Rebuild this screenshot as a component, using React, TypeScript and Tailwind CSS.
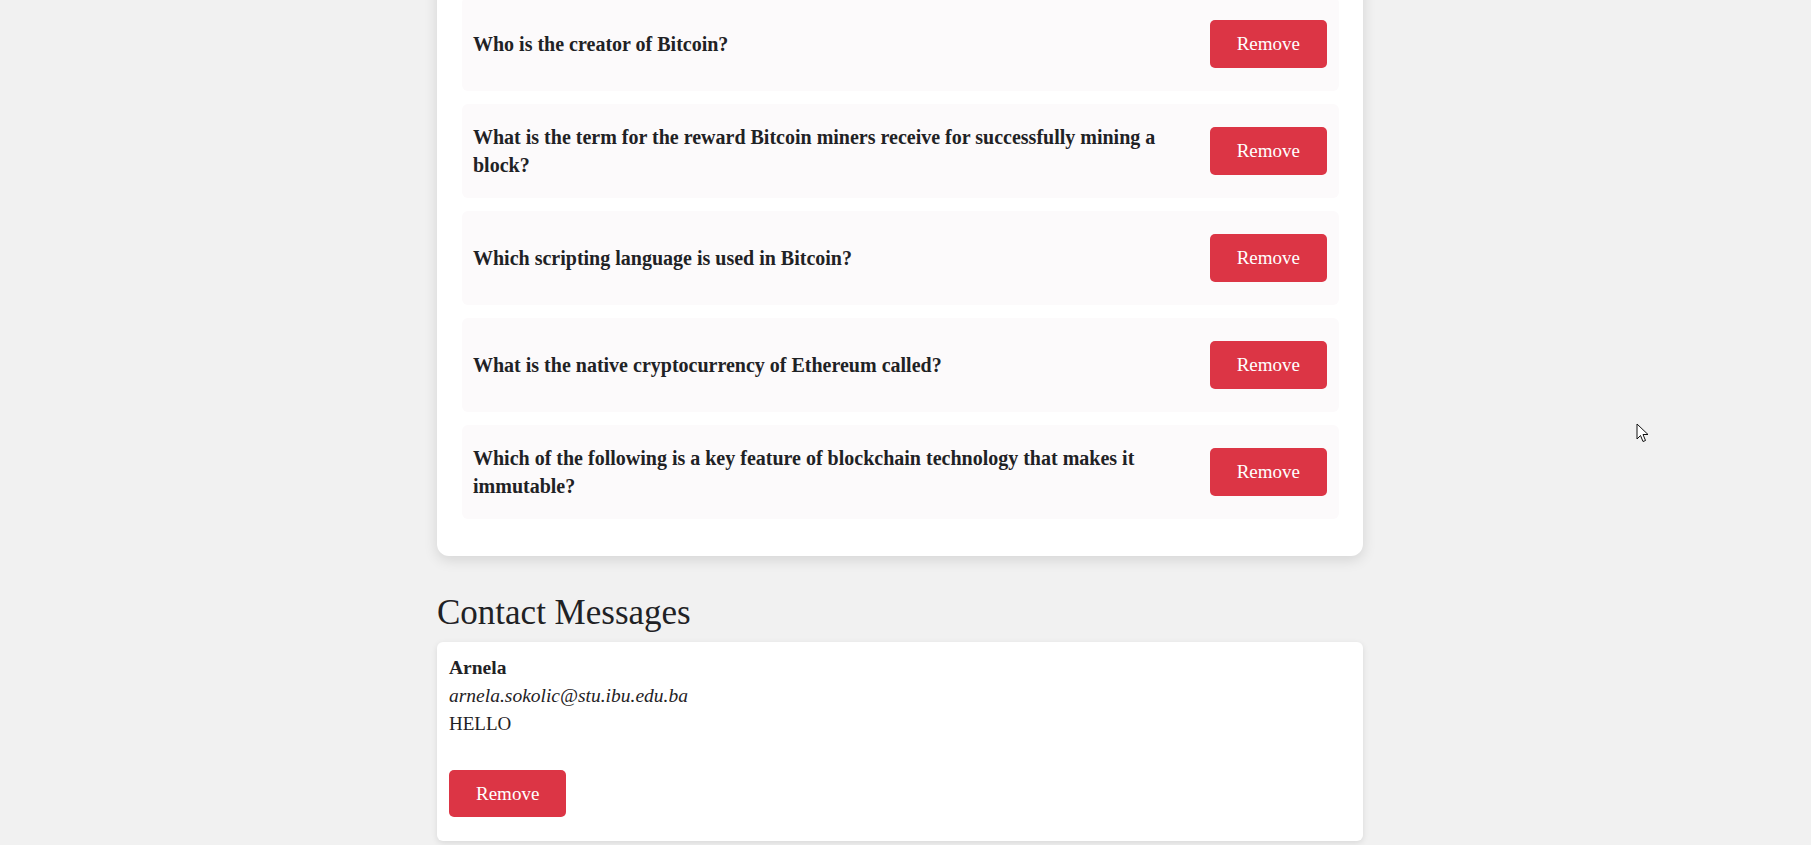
import React from 'react';

const questions = [
  'Who is the creator of Bitcoin?',
  'What is the term for the reward Bitcoin miners receive for successfully mining a block?',
  'Which scripting language is used in Bitcoin?',
  'What is the native cryptocurrency of Ethereum called?',
  'Which of the following is a key feature of blockchain technology that makes it immutable?',
];

const serif = { fontFamily: '"Liberation Serif", "DejaVu Serif", serif' };

const App: React.FC = () => {
  return (
    <div className="relative min-h-[845px] bg-[#f1f1f1] text-[#1f2225] overflow-hidden pr-[11px]" style={serif}>
      <div className="mx-auto w-[926px]">
        {/* Questions card */}
        <div className="-mt-[27px] bg-white rounded-xl shadow-[0_4px_14px_rgba(0,0,0,0.12)] pt-6 pb-6 pl-[25px] pr-6">
          {questions.map((q) => (
            <div
              key={q}
              className="mb-[13px] flex items-center gap-6 rounded-md bg-[#fcfafb] pl-[11px] pr-3 py-[19px]"
            >
              <p className="flex-1 text-[20px] font-bold leading-[28px]">{q}</p>
              <button className="my-1 h-12 px-[27px] rounded-[5px] bg-[#dc3545] text-white text-[19px] leading-6 shrink-0">
                Remove
              </button>
            </div>
          ))}
        </div>

        {/* Contact messages */}
        <h2 className="mt-[36px] mb-[9px] text-[35px] leading-[41px] font-normal">Contact Messages</h2>
        <div className="bg-white rounded-md shadow-[0_2px_6px_rgba(0,0,0,0.1)] p-3">
          <p className="text-[19.5px] font-bold leading-[28px]">Arnela</p>
          <p className="text-[19.5px] italic leading-[28px]">arnela.sokolic@stu.ibu.edu.ba</p>
          <p className="text-[19px] leading-[28px] mb-[32px]">HELLO</p>
          <button className="mb-3 h-[47px] px-[27px] rounded-[5px] bg-[#dc3545] text-white text-[19px] leading-6">
            Remove
          </button>
        </div>
      </div>

      {/* mouse pointer */}
      <svg className="absolute left-[1636px] top-[423px]" width="14" height="21" viewBox="0 0 14 21">
        <path d="M1 1 L1 16 L4.5 12.5 L7 18.5 L9.5 17.5 L7 11.5 L12 11.5 Z" fill="#fff" stroke="#111" strokeWidth="1" strokeLinejoin="round" />
      </svg>
    </div>
  );
};

export default App;
